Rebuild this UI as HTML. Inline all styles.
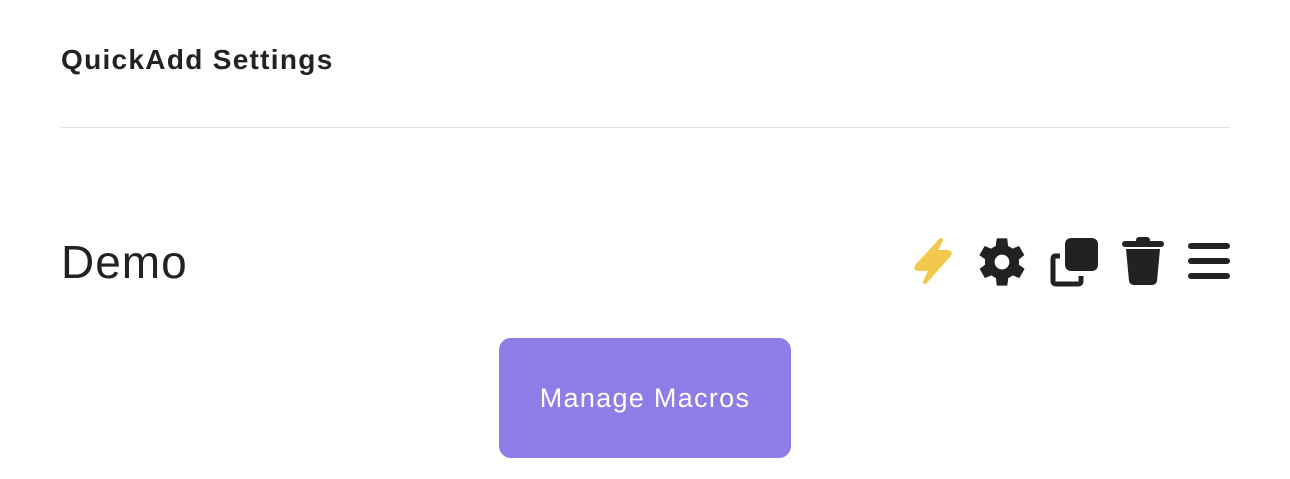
<!DOCTYPE html>
<html><head><style>
body{margin:0;width:1290px;height:479px;background:#fff;font-family:"Liberation Sans",sans-serif;color:#222;position:relative;overflow:hidden}
.t{position:absolute;left:61px;top:44px;font-size:28px;font-weight:bold;letter-spacing:1.3px}
.hr{position:absolute;left:61px;top:127px;width:1169px;height:1px;background:#e3e3e3}
.d{position:absolute;left:61px;top:235px;font-size:46px;letter-spacing:1px}
.b{position:absolute;left:499px;top:338px;width:292px;height:120px;background:#907ce6;border-radius:12px;color:#fff;font-size:27px;text-align:center;line-height:120px;letter-spacing:1.3px}
svg{position:absolute}
</style></head><body>
<div class="t">QuickAdd Settings</div>
<div class="hr"></div>
<div class="d">Demo</div>
<svg style="left:910px;top:236px" width="46" height="50" viewBox="0 0 46 50"><path d="M31 4 L7 30 Q5 33 9 33 L21 33 L15 46 L39 19 Q41 16 37 16 L25 16 Z" fill="#f2c94c" stroke="#f2c94c" stroke-width="4" stroke-linejoin="round"/></svg>
<svg style="left:977px;top:237px" width="50" height="50" viewBox="2.5 2.5 19 19"><path fill="#222" d="M19.4 13a7.5 7.5 0 0 0 0-2l2.1-1.6-2-3.5-2.5 1a7 7 0 0 0-1.7-1L15 3h-4l-.4 2.9a7 7 0 0 0-1.7 1l-2.5-1-2 3.5L6.6 11a7.5 7.5 0 0 0 0 2l-2.1 1.6 2 3.5 2.5-1a7 7 0 0 0 1.7 1L11 21h4l.4-2.9a7 7 0 0 0 1.7-1l2.5 1 2-3.5zM13 14.8A2.8 2.8 0 1 1 13 9.2a2.8 2.8 0 0 1 0 5.6z" transform="translate(-1 0)"/></svg>
<svg style="left:1049px;top:236px" width="50" height="52" viewBox="0 0 50 52"><rect x="16" y="2" width="33" height="33" rx="6" fill="#222"/><path d="M11 20 H6 Q4 20 4 23 V45 Q4 48 7 48 H29 Q32 48 32 45 V40" fill="none" stroke="#222" stroke-width="5" stroke-linejoin="round"/></svg>
<svg style="left:1120px;top:236px" width="46" height="52" viewBox="0 0 46 52"><rect x="2" y="5" width="42" height="6" rx="3" fill="#222"/><rect x="16" y="1" width="14" height="6" rx="3" fill="#222"/><path d="M6 13 H40 L37 45 Q36 49 32 49 H14 Q10 49 9 45 Z" fill="#222"/></svg>
<svg style="left:1187px;top:242px" width="44" height="38" viewBox="0 0 44 38"><g stroke="#222" stroke-width="6" stroke-linecap="round"><line x1="4" y1="4" x2="40" y2="4"/><line x1="4" y1="19" x2="40" y2="19"/><line x1="4" y1="34" x2="40" y2="34"/></g></svg>
<div class="b">Manage Macros</div>
</body></html>
